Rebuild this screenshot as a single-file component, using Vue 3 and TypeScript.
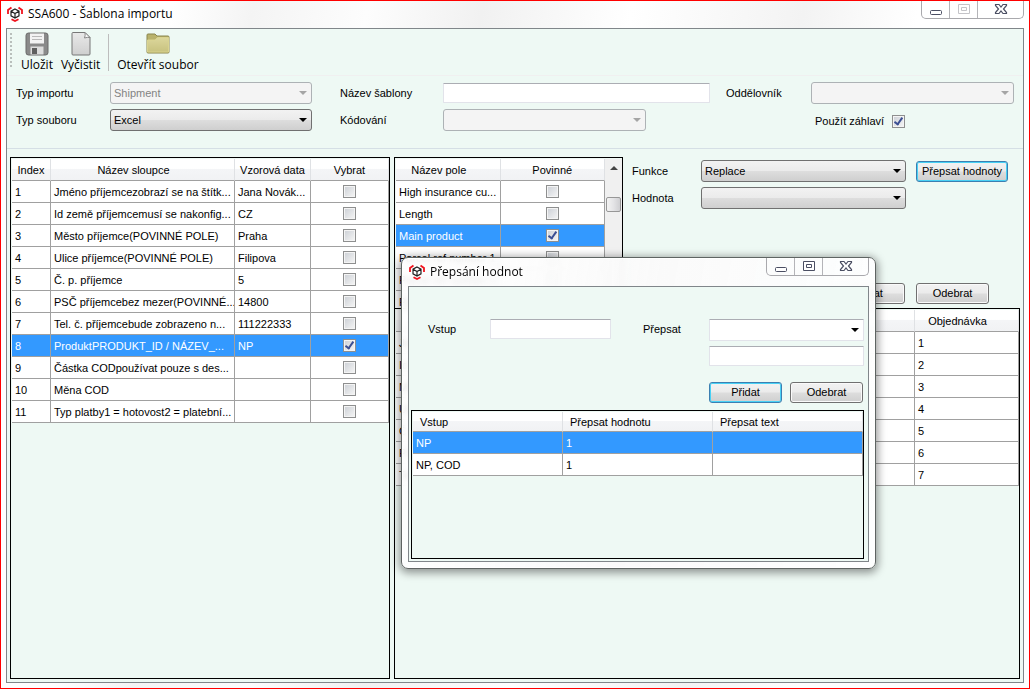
<script setup lang="ts">
import { ref } from 'vue'

interface SourceColumn {
  name: string
  sample: string
  picked: boolean
}

interface TargetField {
  name: string
  required: boolean
}

const templateName = ref('')
const useHeader = ref(true)
const selectedColumn = 7
const selectedField = 2
const selectedRewrite = 0

const columns = ref<SourceColumn[]>([
  { name: 'Jméno příjemcezobrazí se na štítk...', sample: 'Jana Novák...', picked: false },
  { name: 'Id země příjemcemusí se nakonfig...', sample: 'CZ', picked: false },
  { name: 'Město příjemce(POVINNÉ POLE)', sample: 'Praha', picked: false },
  { name: 'Ulice příjemce(POVINNÉ POLE)', sample: 'Filipova', picked: false },
  { name: 'Č. p. příjemce', sample: '5', picked: false },
  { name: 'PSČ příjemcebez mezer(POVINNÉ...', sample: '14800', picked: false },
  { name: 'Tel. č. příjemcebude zobrazeno n...', sample: '111222333', picked: false },
  { name: 'ProduktPRODUKT_ID / NÁZEV_...', sample: 'NP', picked: true },
  { name: 'Částka CODpoužívat pouze s des...', sample: '', picked: false },
  { name: 'Měna COD', sample: '', picked: false },
  { name: 'Typ platby1 = hotovost2 = platební...', sample: '', picked: false },
])

const fields = ref<TargetField[]>([
  { name: 'High insurance cu...', required: false },
  { name: 'Length', required: false },
  { name: 'Main product', required: true },
  { name: 'Parcel ref number 1', required: false },
  { name: 'Parcel ref number 2', required: false },
  { name: 'Phone', required: false },
])

const mappings = ['Jméno', 'Id země', 'Město', 'Ulice', 'Č. p.', 'PSČ', 'Tel. č.']

const rewrites = [
  { input: 'NP', value: '1', text: '' },
  { input: 'NP, COD', value: '1', text: '' },
]
</script>

<template>
  <div class="window">
    <header class="titlebar">
      <svg class="logo" viewBox="0 0 16 16" aria-hidden="true">
        <path d="M1 8V4L4.500 1.500M11.500 1.500L15 4v4M4.500 13.200L8 15l3.500-1.800" fill="none" stroke="#f0141e" stroke-width="1.800" />
        <path d="M8 3l4 2.200v4.600L8 12l-4-2.200V5.200zM4 5.200L8 7.500l4-2.300M8 7.500V12" fill="#fff" stroke="#222" stroke-width="1.200" />
      </svg>
      <h1>SSA600 - Šablona importu</h1>
      <div class="controls">
        <button type="button" aria-label="Minimalizovat">
          <svg width="14" height="14" viewBox="0 0 14 14"><rect x="1.500" y="7.500" width="11" height="4" rx="1" fill="#fff" stroke="#4b4f63" /></svg>
        </button>
        <button type="button" aria-label="Maximalizovat" disabled>
          <svg width="14" height="14" viewBox="0 0 14 14"><path d="M1.500 1.500h11v9h-11zM4.500 4.500h5v3h-5z" fill="none" stroke="#c4c4c8" /></svg>
        </button>
        <button type="button" class="close" aria-label="Zavřít">
          <svg width="14" height="14" viewBox="0 0 14 14"><path d="M1.500 1.500h3.500l2 2.500 2-2.500h3.500v1L9.500 6l3 3.500v1H9L7 8l-2 2.500H1.500v-1l3-3.500-3-3.500z" fill="#fff" stroke="#4b4f63" stroke-width="1.200" /></svg>
        </button>
      </div>
    </header>

    <main class="client">
      <nav class="toolbar">
        <span class="grip"></span>
        <button type="button">
          <svg width="26" height="26" viewBox="0 0 26 26">
            <rect x="2" y="2" width="22" height="22" rx="2.500" fill="#8a8a8a" stroke="#6a6a6a" />
            <path d="M6 2.500h14v10H6z" fill="#f3f3f3" />
            <path d="M8 5.500h10M8 8.500h10" stroke="#b9b9b9" />
            <path d="M6.500 15.500h13v8h-13z" fill="#ddd" />
            <path d="M8 17h5v6H8z" fill="#5f5f5f" />
          </svg>
          <span>Uložit</span>
        </button>
        <button type="button">
          <svg width="26" height="26" viewBox="0 0 26 26">
            <defs>
              <linearGradient id="paper" x2="0" y2="1"><stop stop-color="#e9e9e9" /><stop offset="1" stop-color="#cfcfcf" /></linearGradient>
            </defs>
            <path d="M5 1.500h12l5 5V23q0 1-1 1H5q-1 0-1-1V2.500q0-1 1-1z" fill="url(#paper)" stroke="#777" />
            <path d="M17 1.500q.5 3-.5 5.500 3-1 5.500-.5z" fill="#f8f8f8" stroke="#888" />
          </svg>
          <span>Vyčistit</span>
        </button>
        <span class="separator"></span>
        <button type="button">
          <svg width="26" height="26" viewBox="0 0 26 26">
            <defs>
              <linearGradient id="folder" x2="0" y2="1"><stop stop-color="#dcd79c" /><stop offset="1" stop-color="#c8c27f" /></linearGradient>
            </defs>
            <path d="M2 4q0-1 1-1h7l2 2h11q1 0 1 1v15q0 1-1 1H3q-1 0-1-1z" fill="#b9b26c" stroke="#8b864f" />
            <path d="M2.500 9H10l2.500-2.500h11V21h-21z" fill="url(#folder)" stroke="#d9d38f" />
          </svg>
          <span>Otevřít soubor</span>
        </button>
      </nav>

      <form class="settings" @submit.prevent>
        <label for="import-type">Typ importu</label>
        <div class="combo">
          <select id="import-type" disabled><option>Shipment</option></select>
        </div>
        <label class="second" for="template-name">Název šablony</label>
        <input id="template-name" v-model="templateName" type="text" />
        <label class="third" for="separator">Oddělovník</label>
        <div class="combo">
          <select id="separator" disabled><option></option></select>
        </div>
        <label for="file-type">Typ souboru</label>
        <div class="combo">
          <select id="file-type"><option>Excel</option></select>
        </div>
        <label class="second" for="encoding">Kódování</label>
        <div class="combo encoding">
          <select id="encoding" disabled><option></option></select>
        </div>
        <div class="header-check">
          <label for="use-header">Použít záhlaví</label>
          <input id="use-header" v-model="useHeader" type="checkbox" />
        </div>
      </form>

      <div class="panes">
        <section class="grid-box">
          <table>
            <colgroup>
              <col class="c-index" /><col /><col class="c-sample" /><col class="c-pick" />
            </colgroup>
            <thead>
              <tr><th>Index</th><th class="sortable">Název sloupce</th><th>Vzorová data</th><th>Vybrat</th></tr>
            </thead>
            <tbody>
              <tr v-for="(column, i) in columns" :key="column.name" :class="{ selected: i === selectedColumn }">
                <td>{{ i + 1 }}</td>
                <td>{{ column.name }}</td>
                <td>{{ column.sample }}</td>
                <td class="check"><input v-model="column.picked" type="checkbox" :aria-label="'Vybrat ' + column.name" /></td>
              </tr>
            </tbody>
          </table>
        </section>

        <section class="right">
          <div class="upper">
            <div class="grid-box fields">
              <table>
                <colgroup><col /><col class="c-half" /></colgroup>
                <thead>
                  <tr><th class="sortable">Název pole</th><th>Povinné</th></tr>
                </thead>
                <tbody>
                  <tr v-for="(field, i) in fields" :key="field.name" :class="{ selected: i === selectedField }">
                    <td>{{ field.name }}</td>
                    <td class="check"><input v-model="field.required" type="checkbox" :aria-label="'Povinné ' + field.name" /></td>
                  </tr>
                </tbody>
              </table>
              <div class="scrollbar"><span class="up"></span><span class="thumb"></span></div>
            </div>
            <form class="function" @submit.prevent>
              <div class="function-rows">
                <label for="function">Funkce</label>
                <div class="combo">
                  <select id="function"><option>Replace</option></select>
                </div>
                <button type="button" class="push default">Přepsat hodnoty</button>
                <label for="value">Hodnota</label>
                <div class="combo">
                  <select id="value"><option></option></select>
                </div>
              </div>
              <div class="actions">
                <button type="button" class="push">Přidat</button>
                <button type="button" class="push">Odebrat</button>
              </div>
            </form>
          </div>
          <div class="grid-box lower">
            <table>
              <colgroup><col /><col class="c-order" /></colgroup>
              <thead>
                <tr><th></th><th class="sortable">Objednávka</th></tr>
              </thead>
              <tbody>
                <tr v-for="(mapping, i) in mappings" :key="mapping">
                  <td>{{ mapping }}</td>
                  <td>{{ i + 1 }}</td>
                </tr>
              </tbody>
            </table>
          </div>
        </section>
      </div>
    </main>

    <div class="dialog" role="dialog" aria-labelledby="dialog-title">
      <header class="titlebar">
        <svg class="logo" viewBox="0 0 16 16" aria-hidden="true">
          <path d="M1 8V4L4.500 1.500M11.500 1.500L15 4v4M4.500 13.200L8 15l3.500-1.800" fill="none" stroke="#f0141e" stroke-width="1.800" />
          <path d="M8 3l4 2.200v4.600L8 12l-4-2.200V5.200zM4 5.200L8 7.500l4-2.300M8 7.500V12" fill="#fff" stroke="#222" stroke-width="1.200" />
        </svg>
        <h2 id="dialog-title">Přepsání hodnot</h2>
        <div class="controls">
          <button type="button" aria-label="Minimalizovat">
            <svg width="14" height="14" viewBox="0 0 14 14"><rect x="1.500" y="7.500" width="11" height="4" rx="1" fill="#fff" stroke="#4b4f63" /></svg>
          </button>
          <button type="button" aria-label="Maximalizovat">
            <svg width="14" height="14" viewBox="0 0 14 14"><path d="M1.500 1.500h11v9h-11zM4.500 4.500h5v3h-5z" fill="#fff" stroke="#4b4f63" /></svg>
          </button>
          <button type="button" class="close" aria-label="Zavřít">
            <svg width="14" height="14" viewBox="0 0 14 14"><path d="M1.500 1.500h3.500l2 2.500 2-2.500h3.500v1L9.500 6l3 3.500v1H9L7 8l-2 2.500H1.500v-1l3-3.500-3-3.500z" fill="#fff" stroke="#4b4f63" stroke-width="1.200" /></svg>
          </button>
        </div>
      </header>
      <div class="dialog-client">
        <form class="rewrite" @submit.prevent>
          <label for="rewrite-input">Vstup</label>
          <input id="rewrite-input" type="text" />
          <label class="to" for="rewrite-value">Přepsat</label>
          <div class="targets">
            <div class="combo editable">
              <select id="rewrite-value"><option></option></select>
            </div>
            <input type="text" aria-label="Přepsat text" />
            <div class="actions">
              <button type="button" class="push default">Přidat</button>
              <button type="button" class="push">Odebrat</button>
            </div>
          </div>
        </form>
        <div class="grid-box rewrites">
          <table>
            <thead>
              <tr><th class="left">Vstup</th><th class="left">Přepsat hodnotu</th><th class="left">Přepsat text</th></tr>
            </thead>
            <tbody>
              <tr v-for="(rule, i) in rewrites" :key="rule.input" :class="{ selected: i === selectedRewrite }">
                <td>{{ rule.input }}</td>
                <td>{{ rule.value }}</td>
                <td>{{ rule.text }}</td>
              </tr>
            </tbody>
          </table>
        </div>
      </div>
    </div>
  </div>
</template>

<style>
body {
  margin: 0;
}
</style>

<style scoped>
.window,
.window * {
  box-sizing: border-box;
}

.window {
  position: relative;
  display: flex;
  flex-direction: column;
  min-height: 100vh;
  padding: 0 5px 5px;
  border: 1px solid #f00;
  background: linear-gradient(100deg, #fff 15%, #f4f4f4 22%, #fdfdfd 32%, #f1f1f1 42%, #fff 55%, #f3f3f3 70%, #fff 80%);
  color: #000;
  font: 11px/16px "Liberation Sans", Arial, sans-serif;
}

button,
input,
select {
  margin: 0;
  color: inherit;
  font: inherit;
}

.titlebar {
  display: flex;
  align-items: center;
  gap: 5px;
  height: 27px;
  padding: 0 0 1px 1px;
}

.titlebar h1,
.titlebar h2 {
  flex: 1;
  margin: 0;
  font: 12px/16px "Open Sans", "Noto Sans", sans-serif;
}

.logo {
  width: 16px;
  height: 16px;
}

.controls {
  display: flex;
  align-self: flex-start;
  height: 18px;
  border: 1px solid #a9a9ad;
  border-top: 0;
  border-radius: 0 0 5px 5px;
}

.controls button {
  display: flex;
  align-items: center;
  justify-content: center;
  width: 28px;
  padding: 0;
  border: 0;
  border-right: 1px solid #b4b4b8;
  background: none;
}

.controls .close {
  width: 45px;
  border-right: 0;
}

.client {
  display: flex;
  flex: 1;
  flex-direction: column;
  border: 1px solid #80868a;
  background: #eef9f4;
}

.toolbar {
  display: flex;
  height: 47px;
  padding: 2px 3px 0;
  border-bottom: 1px solid #f0f0f0;
}

.toolbar button {
  display: flex;
  flex-direction: column;
  align-items: center;
  padding: 0 4px;
  border: 0;
  background: none;
  font: 12px/16px "Open Sans", "Noto Sans", sans-serif;
}

.grip {
  width: 2px;
  height: 34px;
  margin: 2px 5px 0 0;
  background: repeating-linear-gradient(#b9bfbc 0 2px, transparent 2px 4px);
}

.separator {
  width: 1px;
  height: 37px;
  margin: 3px 4px 0;
  background: #bdbdbd;
}

.settings {
  display: grid;
  grid-template-columns: 94px 202fr 131px 267fr 101px 203fr;
  gap: 5px 0;
  align-items: center;
  height: 73px;
  align-content: start;
  padding: 6px 9px 0;
  border-bottom: 1px solid #d5dfe5;
}

.settings .second {
  padding-left: 28px;
}

.settings .third {
  padding-left: 16px;
}

.encoding {
  width: 76%;
}

.header-check {
  display: flex;
  grid-column: 6;
  align-items: center;
  gap: 8px;
  padding: 2px 0 0 4px;
}

input[type="text"] {
  width: 100%;
  min-width: 0;
  height: 20px;
  padding: 0 3px;
  border: 1px solid #e2e3ea;
  border-top-color: #abadb3;
  border-radius: 1px;
  background: #fff;
}

.combo {
  display: grid;
  align-items: center;
}

.combo select,
.combo::after {
  grid-area: 1 / 1;
}

.combo::after {
  z-index: 1;
  justify-self: end;
  margin-right: 5px;
  border: 4px solid transparent;
  border-top-color: #000;
  border-bottom: 0;
  content: "";
  pointer-events: none;
}

.combo:has(select:disabled)::after {
  border-top-color: #a5a5a5;
}

.combo select {
  width: 100%;
  height: 22px;
  padding: 0 18px 0 3px;
  border: 1px solid #707070;
  border-radius: 3px;
  background: linear-gradient(#f2f2f2 0 0, #ebebeb 48%, #dddddd 52%, #cfcfcf);
  appearance: none;
}

.combo select:disabled {
  border-color: #adb2b5;
  background: #f4f4f4;
  color: #838383;
  opacity: 1;
}

.combo.editable select {
  border-color: #abadb3 #e2e3ea #e2e3ea;
  border-radius: 1px;
  background: #fff;
}

input[type="checkbox"] {
  display: grid;
  align-content: start;
  width: 13px;
  height: 13px;
  border: 1px solid #8e8f8f;
  outline: 1px solid #f4f4f4;
  outline-offset: -2px;
  background: linear-gradient(135deg, #cbcfd5, #f6f6f6);
  appearance: none;
}

input[type="checkbox"]:checked::after {
  width: 5px;
  height: 9px;
  margin: 0 0 0 3px;
  border: solid #3c4f93;
  border-width: 0 2px 2px 0;
  box-sizing: border-box;
  content: "";
  transform: rotate(35deg);
}

.push {
  min-width: 73px;
  height: 21px;
  padding: 0 5px;
  border: 1px solid #707070;
  border-radius: 3px;
  background: linear-gradient(#f2f2f2, #ebebeb 48%, #dddddd 52%, #cfcfcf);
  box-shadow: inset 0 0 0 1px #fafafa;
  line-height: 17px;
  white-space: nowrap;
}

.push.default {
  border-color: #3c7fb1;
  box-shadow: inset 0 0 0 1px #48d1f5;
}

.actions {
  display: flex;
  gap: 8px;
}

.panes {
  display: grid;
  flex: 1;
  grid-template-columns: minmax(0, 380fr) minmax(0, 626fr);
  gap: 4px;
  padding: 8px 3px 3px;
}

.grid-box {
  overflow: hidden;
  padding: 1px 0 0 1px;
  border: 1px solid #000;
  background: #eef9f4;
}

table {
  width: 100%;
  border-spacing: 0;
  table-layout: fixed;
}

.c-index {
  width: 39px;
}

.c-sample {
  width: 76px;
}

.c-pick {
  width: 78px;
}

.c-order {
  width: 104px;
}

.c-half {
  width: 50%;
}

th {
  height: 22px;
  padding: 0;
  border-right: 1px solid #dfe1e4;
  border-bottom: 1px solid #a0a0a0;
  background: linear-gradient(#fff 45%, #f4f5f7 50%, #f1f2f4);
  font-weight: 400;
}

th.sortable {
  padding-right: 18px;
}

th.left {
  padding-left: 7px;
  text-align: left;
}

td {
  overflow: hidden;
  height: 22px;
  padding: 0 0 0 3px;
  border-right: 1px solid #a0a0a0;
  border-bottom: 1px solid #a0a0a0;
  background: #fff;
  white-space: nowrap;
}

td.check {
  padding: 0;
}

td.check input {
  margin: 0 auto;
}

.selected td {
  background: #39f;
  color: #fff;
}

.right {
  display: flex;
  flex-direction: column;
}

.upper {
  display: grid;
  grid-template-columns: 229px minmax(0, 1fr);
  height: 151px;
}

.fields {
  display: flex;
  border-bottom: 0;
}

.fields table {
  flex: 1;
  align-self: flex-start;
}

.scrollbar {
  display: flex;
  flex-direction: column;
  align-items: center;
  width: 17px;
  background: #f0f0f0;
}

.up {
  margin: 7px 0 27px;
  border: 4px solid transparent;
  border-top: 0;
  border-bottom-color: #444;
}

.thumb {
  width: 15px;
  height: 15px;
  border: 1px solid #979797;
  border-radius: 2px;
  background: linear-gradient(90deg, #f3f3f3, #e4e4e6 50%, #cfcfd2);
}

.function {
  display: flex;
  flex-direction: column;
  justify-content: space-between;
  padding: 3px 12px 4px 9px;
}

.function-rows {
  display: grid;
  grid-template-columns: 69px minmax(0, 1fr) 92px;
  gap: 5px 0;
  align-items: center;
}

.function-rows .combo {
  margin-right: 10px;
}

.function .actions {
  justify-content: flex-end;
  gap: 11px;
  padding-right: 19px;
}

.lower {
  flex: 1;
}

.dialog {
  position: absolute;
  top: 256px;
  left: 400px;
  display: flex;
  flex-direction: column;
  width: 475px;
  height: 312px;
  padding: 0 6px 6px;
  border: 1px solid #5e6462;
  border-radius: 7px;
  background: linear-gradient(100deg, rgba(255, 255, 255, 0.86), rgba(250, 250, 250, 0.96) 50%, rgba(255, 255, 255, 0.92));
  box-shadow: 0 2px 9px 2px rgba(0, 0, 0, 0.4), inset 0 0 0 1px #fff;
  backdrop-filter: blur(3px);
}

.dialog .titlebar {
  height: 28px;
  padding-bottom: 0;
}

.dialog-client {
  display: flex;
  flex: 1;
  flex-direction: column;
  padding: 0 4px 2px 2px;
  border: 1px solid #80868a;
  background: #eef9f4;
}

.rewrite {
  display: grid;
  grid-template-columns: 62px 121px 98px minmax(0, 1fr);
  align-items: start;
  padding: 32px 0 7px 17px;
}

.rewrite label {
  line-height: 20px;
}

.rewrite .to {
  padding-left: 32px;
}

.targets {
  display: grid;
  gap: 5px;
}

.targets .actions {
  margin-top: 11px;
}

.rewrites {
  flex: 1;
}

.rewrites th {
  height: 20px;
}
</style>
